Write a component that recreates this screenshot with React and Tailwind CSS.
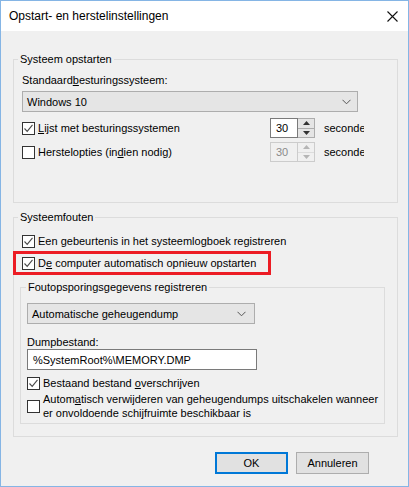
import React from 'react';

// small win10-style controls
function Box({ checked }) {
  return (
    <span className="w-[13px] h-[13px] border border-[#333333] bg-white flex items-center justify-center shrink-0">
      {checked && (
        <svg width="11" height="11" viewBox="0 0 11 11">
          <path d="M1.5 5.5 L4.2 8.3 L9.5 1.8" fill="none" stroke="#4a4a4a" strokeWidth="1.1" />
        </svg>
      )}
    </span>
  );
}

function Chevron() {
  return (
    <svg width="9" height="6" viewBox="0 0 9 6">
      <path d="M0.5 0.8 L4.5 4.8 L8.5 0.8" fill="none" stroke="#555" strokeWidth="1" />
    </svg>
  );
}

function Spinner({ disabled }) {
  const tri = disabled ? '#b5b5b5' : '#333';
  return (
    <div className="flex h-[20px]">
      <div
        className={`w-[28px] border flex items-center pl-[5px] ${
          disabled ? 'border-[#cccccc] bg-[#f0f0f0] text-[#8a8a8a]' : 'border-[#7a7a7a] bg-white text-black'
        }`}
      >
        30
      </div>
      <div className={`w-[17px] border border-l-0 flex flex-col ${disabled ? 'border-[#cccccc]' : 'border-[#adadad]'}`}>
        <div className={`flex-1 flex items-center justify-center border-b ${disabled ? 'bg-[#f0f0f0] border-[#dcdcdc]' : 'bg-[#e5e5e5] border-[#adadad]'}`}>
          <svg width="7" height="4" viewBox="0 0 7 4">
            <path d="M0 4 L3.5 0 L7 4 Z" fill={tri} />
          </svg>
        </div>
        <div className={`flex-1 flex items-center justify-center ${disabled ? 'bg-[#f0f0f0]' : 'bg-[#e5e5e5]'}`}>
          <svg width="7" height="4" viewBox="0 0 7 4">
            <path d="M0 0 L7 0 L3.5 4 Z" fill={tri} />
          </svg>
        </div>
      </div>
    </div>
  );
}

export default function App() {
  return (
    <div className="w-[409px] h-[487px] border border-[#85b5e5] bg-[#f0f0f0] text-black text-[11px] leading-[16px] whitespace-nowrap font-['Liberation_Sans',Arial,sans-serif] flex flex-col overflow-hidden">
      {/* title bar */}
      <div className="h-[30px] bg-white flex items-center justify-between pl-[8px] pr-[10px] shrink-0">
        <span className="text-[12px]">Opstart- en herstelinstellingen</span>
        <svg width="11" height="11" viewBox="0 0 11 11">
          <path d="M0.5 0.5 L10.5 10.5 M10.5 0.5 L0.5 10.5" stroke="#111" strokeWidth="1.1" />
        </svg>
      </div>

      <div className="flex flex-col pl-[12px] pt-[20px]">
        {/* Systeem opstarten */}
        <fieldset className="w-[385px] border border-[#dcdcdc] px-[8px] pt-[5px] pb-[40px]">
          <legend className="ml-[-4px] px-[2px]">Systeem opstarten</legend>
          <div>
            Standaard<span className="underline">b</span>esturingssysteem:
          </div>
          <div className="mt-[3px] w-[336px] h-[21px] border border-[#adadad] bg-[#e5e5e5] flex items-center justify-between pl-[4px] pr-[6px]">
            <span>Windows 10</span>
            <Chevron />
          </div>
          <div className="mt-[6px] h-[20px] flex items-center">
            <div className="w-[248px] flex items-center gap-[3px]">
              <Box checked />
              <span>
                <span className="underline">L</span>ijst met besturingssystemen
              </span>
            </div>
            <Spinner />
            <div className="ml-[9px] w-[40px] overflow-hidden">seconden</div>
          </div>
          <div className="mt-[4px] h-[20px] flex items-center">
            <div className="w-[248px] flex items-center gap-[3px]">
              <Box />
              <span>
                Herstelopties (in<span className="underline">d</span>ien nodig)
              </span>
            </div>
            <Spinner disabled />
            <div className="ml-[9px] w-[40px] overflow-hidden">seconden</div>
          </div>
        </fieldset>

        {/* Systeemfouten */}
        <fieldset className="mt-[6px] w-[385px] border border-[#dcdcdc] px-[8px] pt-[8px] pb-[12px]">
          <legend className="ml-[-4px] px-[2px]">Systeemfouten</legend>
          <div className="h-[16px] flex items-center gap-[3px]">
            <Box checked />
            <span>
              Een <span className="underline">g</span>ebeurtenis in het systeemlogboek registreren
            </span>
          </div>
          <div className="mt-[2px] ml-[-9px] w-[258px] h-[24px] border-[3px] border-[#ec1c24] flex items-center gap-[3px] pl-[6px]">
            <Box checked />
            <span>
              D<span className="underline">e</span> computer automatisch opnieuw opstarten
            </span>
          </div>

          <fieldset className="mt-[4px] ml-[-2px] w-[362px] border border-[#dcdcdc] px-[6px] pb-[3px]">
            <legend className="ml-[-1px] px-[2px]">Foutopsporingsgegevens registreren</legend>
            <div className="mt-[8px] w-[228px] h-[21px] border border-[#adadad] bg-[#e5e5e5] flex items-center justify-between pl-[4px] pr-[8px]">
              <span>Automatische geheugendump</span>
              <Chevron />
            </div>
            <div className="mt-[11px] leading-[14px]">Dumpbestand:</div>
            <div className="w-[230px] h-[21px] border border-[#7a7a7a] bg-white flex items-center pl-[5px]">
              %SystemRoot%\MEMORY.DMP
            </div>
            <div className="mt-[5px] h-[16px] flex items-center gap-[3px]">
              <Box checked />
              <span>
                Bestaand bestand <span className="underline">o</span>verschrijven
              </span>
            </div>
            <div className="mt-[1px] flex items-center gap-[3px]">
              <Box />
              <span className="leading-[14px]">
                Autom<span className="underline">a</span>tisch verwijderen van geheugendumps uitschakelen wanneer
                <br />
                er onvoldoende schijfruimte beschikbaar is
              </span>
            </div>
          </fieldset>
        </fieldset>

        {/* buttons */}
        <div className="mt-[15px] w-[356px] flex justify-end gap-[8px]">
          <button className="w-[73px] h-[22px] border-2 border-[#0078d7] bg-[#e1e1e1] flex items-center justify-center">
            OK
          </button>
          <button className="w-[73px] h-[22px] border border-[#adadad] bg-[#e1e1e1] flex items-center justify-center">
            Annuleren
          </button>
        </div>
      </div>
    </div>
  );
}
